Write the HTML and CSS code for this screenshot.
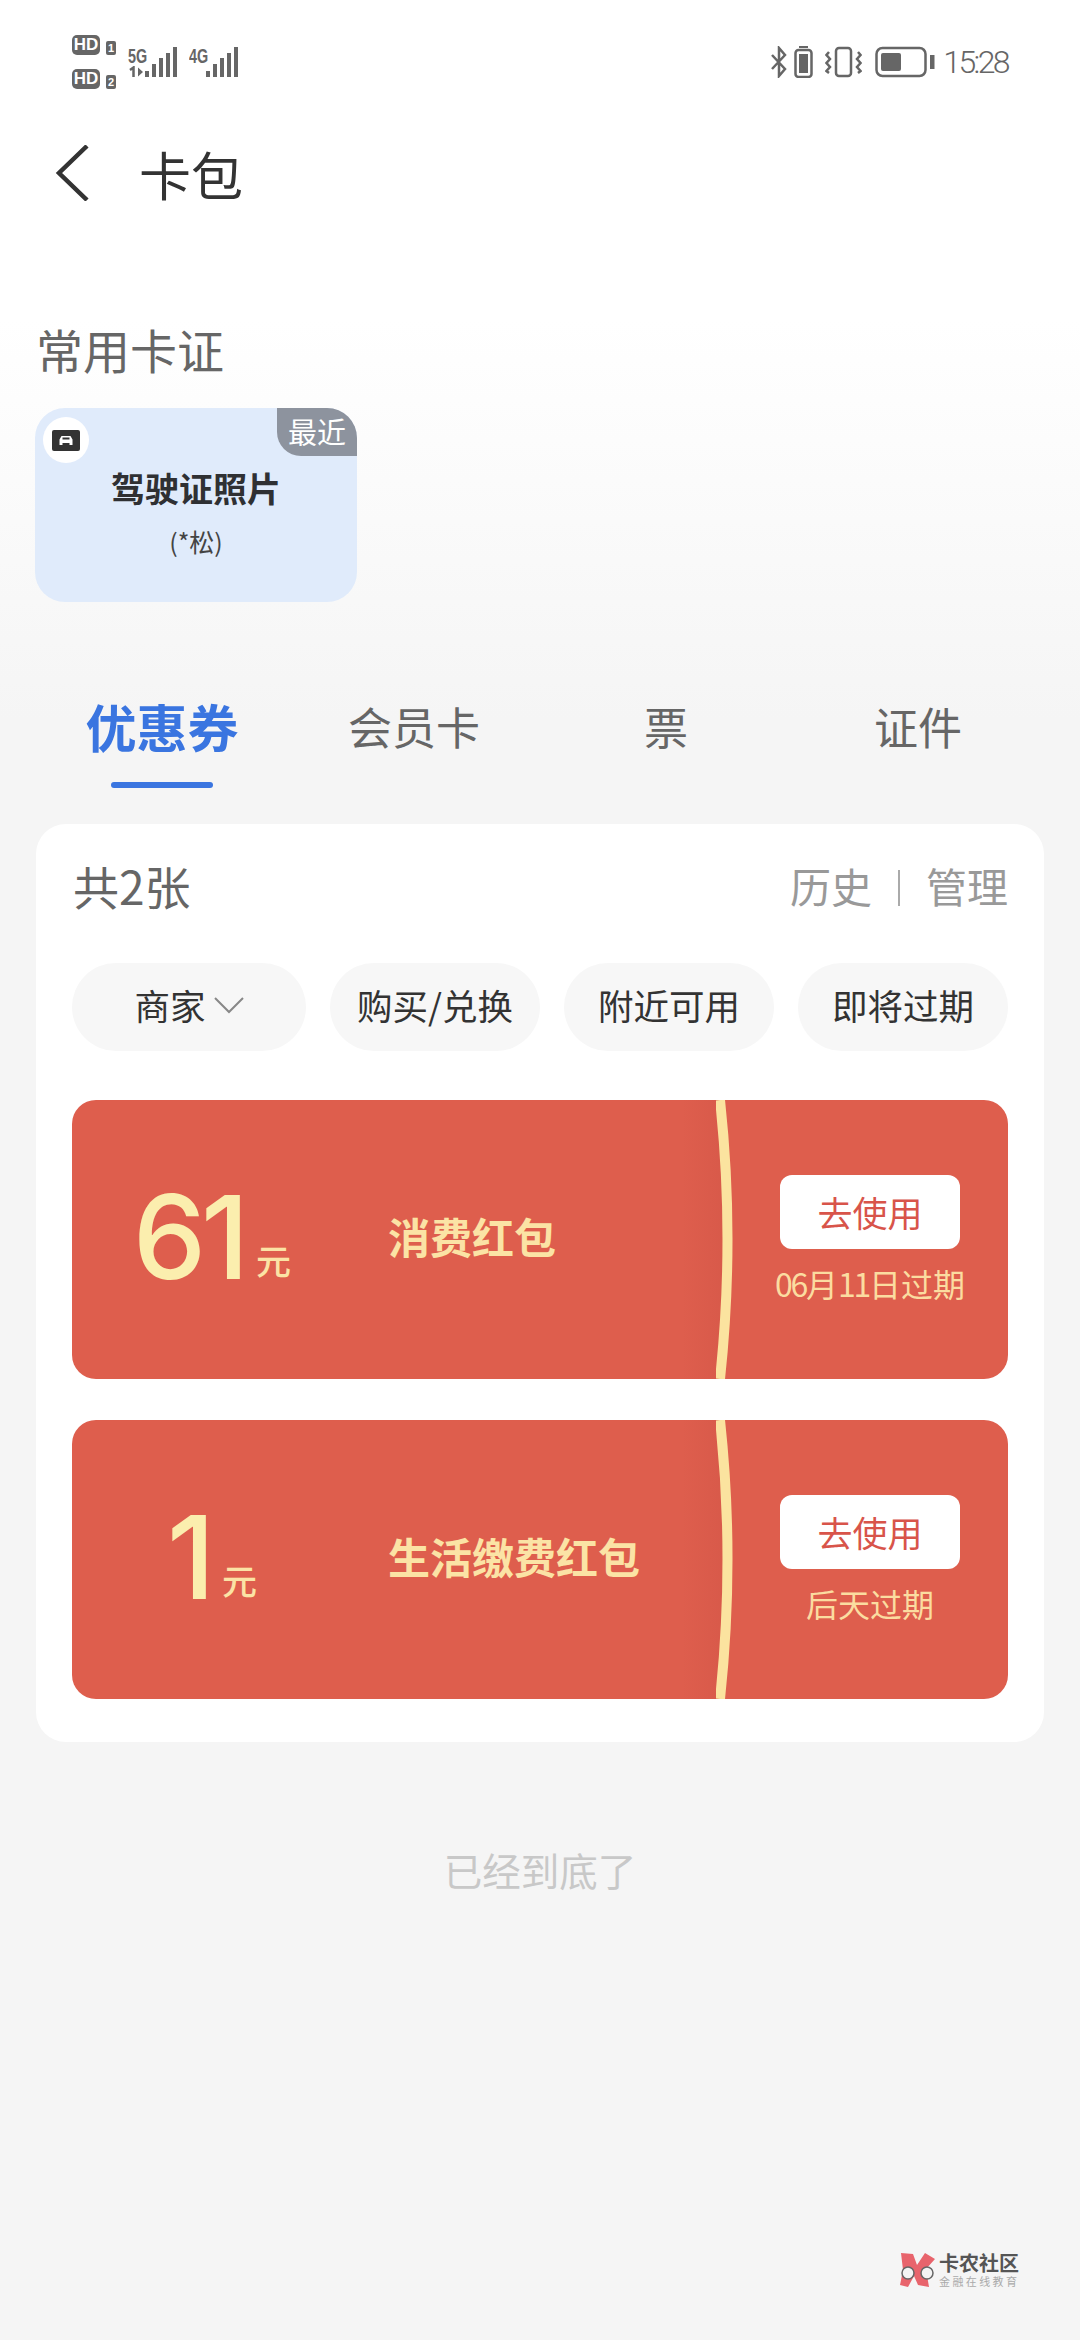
FILE: index.html
```html
<!DOCTYPE html>
<html lang="zh">
  <head>
    <meta charset="UTF-8">
    <meta name="viewport" content="width=device-width, initial-scale=1.0">
    <title>卡包</title>
    <link rel="stylesheet" href="styles.css">
  </head>
  <body>
    <div class="status">
      <div class="status_left">
        <div class="hd_stack">
          <div class="hd_row"><span class="hd">HD</span><span class="sim">1</span></div>
          <div class="hd_row"><span class="hd">HD</span><span class="sim">2</span></div>
        </div>
        <div class="net net_5g">
          <span class="net_name">5G</span>
          <svg class="arrows" width="17" height="12" viewBox="0 0 17 12"><path d="M5.5 11V1.500L2 4" fill="none" stroke="#666" stroke-width="2.500"/><path d="M10 1.500l5 4.500-5 4.500z" fill="#666"/></svg>
          <svg class="bars" width="32" height="30" viewBox="0 0 32 30"><rect x="0" y="24" width="4" height="6" /><rect x="7" y="17" width="4" height="13" /><rect x="14" y="11" width="4" height="19" /><rect x="21" y="6" width="4" height="24" /><rect x="28" y="0" width="4" height="30" /></svg>
        </div>
        <div class="net net_4g">
          <span class="net_name">4G</span>
          <svg class="bars" width="32" height="30" viewBox="0 0 32 30"><rect x="0" y="24" width="4" height="6" /><rect x="7" y="17" width="4" height="13" /><rect x="14" y="11" width="4" height="19" /><rect x="21" y="6" width="4" height="24" /><rect x="28" y="0" width="4" height="30" /></svg>
        </div>
      </div>
      <div class="status_right">
        <svg width="16" height="32" viewBox="0 0 16 32" fill="none" stroke="#666" stroke-width="2.500"><path d="M1 9l13 14-6 7V2l6 7L1 23"/></svg>
        <svg width="19" height="32" viewBox="0 0 19 32"><rect x="5" y="0" width="9" height="2" fill="#666"/><rect x="1.500" y="4" width="16" height="27" rx="3" fill="none" stroke="#666" stroke-width="2.500"/><rect x="5" y="8" width="9" height="19" fill="#666"/></svg>
        <svg width="37" height="32" viewBox="0 0 37 32" fill="none" stroke="#666" stroke-width="2.500"><rect x="11" y="2" width="15" height="28" rx="3"/><path d="M4 6L1.500 9l3.500 4-3.500 4 3.500 4-3.500 4L4 27M33 6l2.500 3-3.500 4 3.500 4-3.500 4 3.500 4L33 27"/></svg>
        <svg class="battery" width="60" height="32" viewBox="0 0 60 32"><rect x="1.500" y="2" width="49" height="28" rx="6" fill="none" stroke="#666" stroke-width="2.500"/><rect x="6" y="7" width="20" height="18" rx="2" fill="#666"/><rect x="55" y="9" width="4.500" height="14" fill="#666"/></svg>
        <span class="time">15:28</span>
      </div>
    </div>

    <header class="title_bar">
      <svg class="back" width="36" height="56" viewBox="0 0 36 56" fill="none" stroke="#333" stroke-width="4.500"><path d="M33 1L5 28l28 27"/></svg>
      <h1>卡包</h1>
    </header>

    <h2 class="section_title">常用卡证</h2>
    <div class="id_card">
      <div class="id_icon">
        <svg width="28" height="21" viewBox="0 0 28 21"><rect width="28" height="21" rx="2" fill="#333"/><path d="M9.500 6h9l2 3.500V15h-3v-2h-7v2h-3V9.500z" fill="#fff"/><rect x="10.500" y="7.500" width="7" height="2" fill="#333"/></svg>
      </div>
      <span class="id_tag">最近</span>
      <div class="id_name">驾驶证照片</div>
      <div class="id_owner">(*松)</div>
    </div>

    <nav class="tabs">
      <div class="tab active">优惠券</div>
      <div class="tab">会员卡</div>
      <div class="tab">票</div>
      <div class="tab">证件</div>
    </nav>

    <main class="panel">
      <div class="panel_head">
        <span class="count">共2张</span>
        <div class="panel_links"><span>历史</span><i class="divider"></i><span>管理</span></div>
      </div>
      <div class="chips">
        <div class="chip chip_wide">商家
          <svg width="30" height="18" viewBox="0 0 30 18" fill="none" stroke="#888" stroke-width="2"><path d="M1 2l14 14L29 2"/></svg>
        </div>
        <div class="chip">购买/兑换</div>
        <div class="chip">附近可用</div>
        <div class="chip">即将过期</div>
      </div>

      <div class="coupon">
        <div class="amount"><span class="num">61</span><span class="unit">元</span></div>
        <div class="coupon_name">消费红包</div>
        <svg class="curve" width="20" height="279" viewBox="0 0 20 279" fill="none" stroke="#fbe39f" stroke-width="10"><path d="M4 0Q19 139 4 279"/></svg>
        <div class="coupon_side">
          <div class="use_btn">去使用</div>
          <div class="expire"><span class="digits">06</span>月<span class="digits">11</span>日过期</div>
        </div>
      </div>

      <div class="coupon">
        <div class="amount"><span class="num">1</span><span class="unit">元</span></div>
        <div class="coupon_name">生活缴费红包</div>
        <svg class="curve" width="20" height="279" viewBox="0 0 20 279" fill="none" stroke="#fbe39f" stroke-width="10"><path d="M4 0Q19 139 4 279"/></svg>
        <div class="coupon_side">
          <div class="use_btn">去使用</div>
          <div class="expire">后天过期</div>
        </div>
      </div>
    </main>

    <p class="end_note">已经到底了</p>

    <div class="watermark">
      <svg width="36" height="36" viewBox="0 0 36 36"><path d="M1 1l12 1 4 11 8-12 10 6-9 10 3 18-11-2-4-9-6 11-8-2 3-15z" fill="#e8646c"/><circle cx="8" cy="21" r="6" fill="#f4f4f4" stroke="#666" stroke-width="1.500"/><circle cx="27" cy="21" r="6" fill="#f4f4f4" stroke="#666" stroke-width="1.500"/></svg>
      <div class="wm_text">
        <div class="wm_name">卡农社区</div>
        <div class="wm_sub">金融在线教育</div>
      </div>
    </div>
  </body>
</html>
```

FILE: styles.css
```css
* {
  padding: 0;
  margin: 0;
  box-sizing: border-box;
  font-family: "Noto Sans CJK SC", "Noto Sans", sans-serif;
}
body {
  position: relative;
  width: 1080px;
  height: 2340px;
  overflow: hidden;
  background: linear-gradient(#ffffff 0, #ffffff 320px, #f5f5f5 720px);
  color: #333;
}

/* status bar */
.status {
  display: flex;
  justify-content: space-between;
  align-items: center;
  height: 92px;
  padding: 31px 72px 0 72px;
}
.status_left, .status_right {
  display: flex;
  align-items: center;
}
.hd_stack {
  display: flex;
  flex-direction: column;
  gap: 14px;
}
.hd_row {
  display: flex;
  align-items: center;
  gap: 6px;
}
.hd {
  width: 28px;
  height: 20px;
  border-radius: 5px;
  background: #666;
  color: #fff;
  font: 700 17px/20px "Liberation Sans", sans-serif;
  text-align: center;
}
.sim {
  width: 10px;
  height: 14px;
  margin-top: 6px;
  border-radius: 2px;
  background: #666;
  color: #fff;
  font: 700 11px/14px "Liberation Sans", sans-serif;
  text-align: center;
}
.net {
  position: relative;
  width: 61px;
  height: 30px;
}
.net_5g { margin-left: 12px; }
.net_name {
  position: absolute;
  left: 0;
  top: -1px;
  color: #666;
  font: 700 20px/20px "Liberation Sans", sans-serif;
  transform: scaleX(0.72);
  transform-origin: left;
}
.arrows {
  position: absolute;
  left: 0;
  top: 19px;
}
.bars {
  position: absolute;
  left: 17px;
  top: 0;
  fill: #666;
}
.status_right { gap: 7px; }
.status_right svg:nth-child(3) { margin-left: 5px; }
.battery { margin-left: 6px; }
.time {
  margin-left: 1px;
  color: #666;
  font: 300 32px/36px Roboto, sans-serif;
  letter-spacing: -2.6px;
}

/* header */
.title_bar {
  display: flex;
  align-items: center;
  height: 74px;
  margin-top: 44px;
  padding-left: 54px;
}
.back { margin-right: 49px; }
h1 {
  padding-top: 2px;
  font-size: 52px;
  font-weight: 400;
  line-height: 74px;
  color: #333;
}
.section_title {
  margin: 109px 0 0 36px;
  font-size: 47px;
  font-weight: 400;
  line-height: 60px;
  color: #666;
}

/* driving licence card */
.id_card {
  position: relative;
  width: 322px;
  height: 194px;
  margin: 29px 0 0 35px;
  padding-top: 56px;
  border-radius: 30px;
  background: #e0ebfb;
  text-align: center;
}
.id_icon {
  position: absolute;
  left: 8px;
  top: 9px;
  display: flex;
  align-items: center;
  justify-content: center;
  width: 46px;
  height: 46px;
  border-radius: 50%;
  background: #fff;
}
.id_tag {
  position: absolute;
  right: 0;
  top: 0;
  width: 80px;
  height: 48px;
  border-radius: 0 30px 0 24px;
  background: #8d939e;
  color: #fff;
  font-size: 29px;
  line-height: 46px;
}
.id_name {
  font-size: 34px;
  font-weight: 700;
  line-height: 48px;
  color: #2f3033;
}
.id_owner {
  margin-top: 9px;
  font-size: 25px;
  line-height: 40px;
  color: #444;
}

/* tabs */
.tabs {
  display: grid;
  grid-template-columns: repeat(4, 252px);
  margin: 78px 0 0 36px;
}
.tab {
  position: relative;
  height: 108px;
  font-size: 44px;
  line-height: 92px;
  text-align: center;
  color: #666;
}
.tab.active {
  font-size: 51px;
  font-weight: 700;
  color: #3a75e0;
}
.tab.active::after {
  content: "";
  position: absolute;
  left: 75px;
  bottom: 0;
  width: 102px;
  height: 6px;
  border-radius: 3px;
  background: #3a75e0;
}

/* coupon panel */
.panel {
  width: 1008px;
  height: 918px;
  margin: 36px 0 0 36px;
  padding: 0 36px;
  border-radius: 30px;
  background: #fff;
}
.panel_head {
  display: flex;
  justify-content: space-between;
  align-items: center;
  height: 130px;
  padding: 0 0 8px 1px;
}
.count {
  font-size: 46px;
  color: #666;
}
.panel_links {
  display: flex;
  align-items: center;
  font-size: 41px;
  color: #999;
}
.divider {
  width: 2px;
  height: 36px;
  margin: 6px 26px 0 26px;
  background: #aaa;
}
.chips {
  display: flex;
  justify-content: space-between;
  margin-top: 9px;
}
.chip {
  display: flex;
  align-items: center;
  justify-content: center;
  gap: 8px;
  width: 210px;
  height: 88px;
  padding-bottom: 5px;
  border-radius: 44px;
  background: #f7f7f7;
  font-size: 35.500px;
  color: #333;
}
.chip_wide { width: 234px; }

.coupon {
  position: relative;
  display: flex;
  align-items: center;
  height: 279px;
  margin-top: 49px;
  border-radius: 24px;
  background: #de5e4d;
}
.coupon + .coupon { margin-top: 41px; }
.coupon::before {
  content: "";
  position: absolute;
  left: 610px;
  top: 0;
  width: 40px;
  height: 100%;
  background: linear-gradient(to right, rgba(190,70,60,0), rgba(190,70,60,0.18));
}
.amount {
  width: 280px;
  padding-bottom: 6px;
  text-align: center;
  color: #fbeeae;
  white-space: nowrap;
}
.num {
  font: 500 116px/130px Inter, sans-serif;
  letter-spacing: -5px;
}
.unit {
  margin-left: 12px;
  font-size: 35px;
  font-weight: 500;
  line-height: 40px;
  vertical-align: 4px;
  color: #fbe3a5;
}
.coupon_name {
  position: relative;
  margin-left: 36px;
  padding-bottom: 8px;
  font-size: 42px;
  font-weight: 700;
  color: #fbe3a5;
}
.curve {
  position: absolute;
  left: 644px;
  top: 0;
}
.coupon_side {
  position: absolute;
  right: 0;
  top: 75px;
  display: flex;
  flex-direction: column;
  align-items: center;
  width: 276px;
}
.use_btn {
  width: 180px;
  height: 74px;
  border-radius: 12px;
  background: #fff;
  color: #d8544a;
  font-size: 35px;
  line-height: 74px;
  text-align: center;
}
.expire {
  margin-top: 12px;
  font-size: 32px;
  line-height: 44px;
  color: #fbdca0;
}
.digits {
  letter-spacing: -2.300px;
}

.end_note {
  margin-top: 99px;
  font-size: 38.500px;
  line-height: 56px;
  text-align: center;
  color: #c8c8c8;
}

/* watermark sits over the page */
.watermark {
  position: absolute;
  left: 900px;
  top: 2252px;
  display: flex;
  gap: 3px;
}
.wm_name {
  font-size: 20px;
  font-weight: 700;
  line-height: 22px;
  color: #555;
}
.wm_sub {
  font-size: 11px;
  line-height: 14px;
  letter-spacing: 2.400px;
  color: #aaa;
}
```
